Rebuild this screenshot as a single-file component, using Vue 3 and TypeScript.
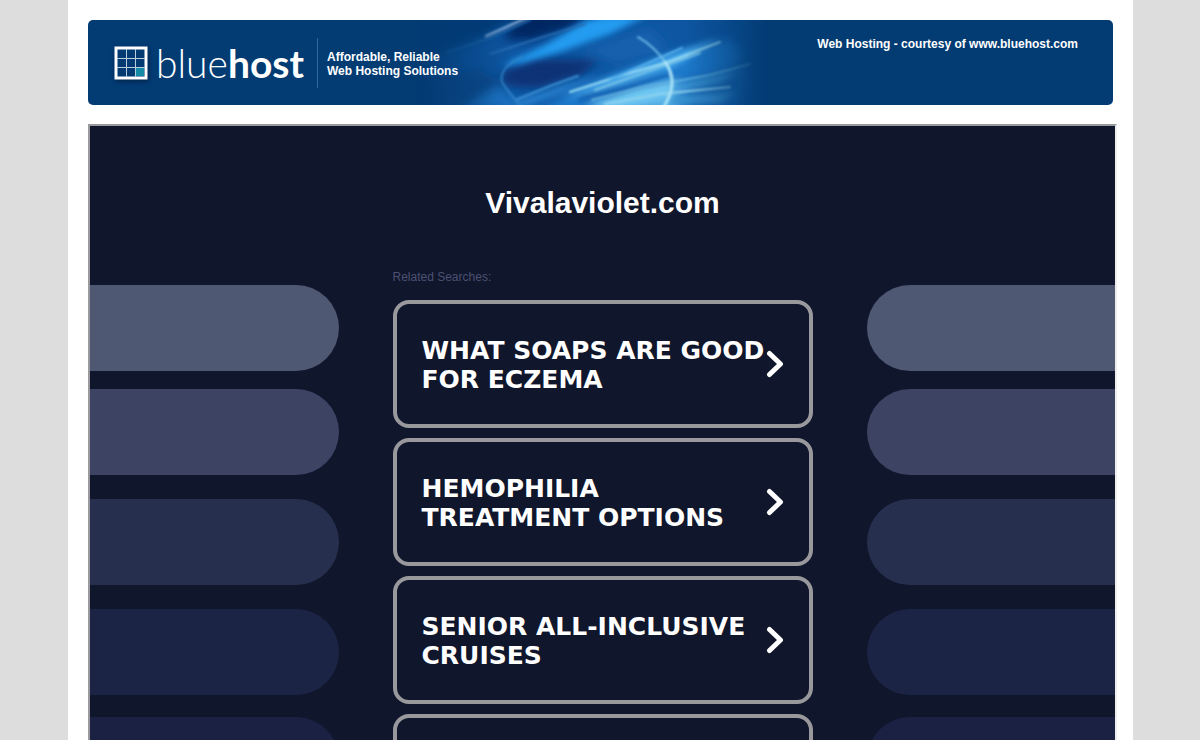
<script setup lang="ts">
interface Search {
  id: number
  label: string
}

const searches: Search[] = [
  { id: 1, label: 'What soaps are good for eczema' },
  { id: 2, label: 'Hemophilia treatment options' },
  { id: 3, label: 'Senior all-inclusive cruises' },
]

const pills: string[] = ['first', 'second', 'third', 'fourth', 'fifth']
</script>

<template>
  <div class="page">
    <div class="sheet">
      <header class="banner">
        <svg class="rays" viewBox="0 0 360 85" aria-hidden="true">
          <defs>
            <linearGradient id="fade" x1="0" x2="1" y1="0" y2="0">
              <stop offset="0" stop-color="#fff" stop-opacity="0" />
              <stop offset="0.25" stop-color="#fff" />
              <stop offset="0.74" stop-color="#fff" />
              <stop offset="0.97" stop-color="#fff" stop-opacity="0" />
            </linearGradient>
            <mask id="edges"><rect width="360" height="85" fill="url(#fade)" /></mask>
            <filter id="soft" filterUnits="userSpaceOnUse" x="-20" y="-20" width="400" height="125"><feGaussianBlur stdDeviation="5" /></filter>
            <filter id="mid" filterUnits="userSpaceOnUse" x="-20" y="-20" width="400" height="125"><feGaussianBlur stdDeviation="3" /></filter>
            <filter id="fine" filterUnits="userSpaceOnUse" x="-20" y="-20" width="400" height="125"><feGaussianBlur stdDeviation="1" /></filter>
          </defs>
          <g mask="url(#edges)">
            <rect width="360" height="85" fill="#0e56a2" />
            <g filter="url(#soft)">
              <path d="M-10 -10H110L60 18L-10 42Z" fill="#053a78" />
              <path d="M105 -10H178L150 8L112 20L82 20Z" fill="#052762" />
              <path d="M82 52L112 38L180 40L160 56L118 68L84 66Z" fill="#0b3376" />
              <path d="M-10 60L60 50L84 62L30 95H-10Z" fill="#07498c" />
              <path d="M40 90L78 66L105 90Z" fill="#1a73c2" />
              <path d="M160 30L230 8L250 30L200 44Z" fill="#1660ae" />
              <path d="M110 95L160 66L230 42L310 18L325 34L270 95Z" fill="#1d78ca" />
              <path d="M175 90L210 70L258 60L258 90Z" fill="#58b2e6" />
              <path d="M262 60L330 45L320 90H265Z" fill="#1566b2" />
            </g>
            <g filter="url(#mid)">
              <path d="M80 46L125 25L165 1L185 -4H226L190 14L140 32L102 43Z" fill="#249bf0" />
              <path d="M142 78L190 58L246 36L300 18L256 46L200 66Z" fill="#45a9ec" />
              <path d="M165 86L215 71L253 62L250 76L200 88Z" fill="#70c8f2" />
              <path d="M160 76L205 64L250 50L205 70L158 82Z" fill="#0b56a8" />
              <path d="M94 82L140 66L180 54L140 74L102 88Z" fill="#2580cd" />
              <path d="M250 66L325 50L300 62L252 73Z" fill="#3f9bd8" />
              <path d="M252 76L318 72L300 83L250 85Z" fill="#3792d0" />
            </g>
            <g filter="url(#fine)" fill="none" stroke-linecap="round">
              <path d="M150 72L200 56L245 43L300 22" stroke="#9addf5" stroke-width="2" />
              <path d="M175 70L240 47L280 33" stroke="#79c2e6" stroke-width="2" />
              <path d="M190 60L235 40L262 28" stroke="#55b1ec" stroke-width="2" />
              <path d="M172 80L225 67L290 55L330 44" stroke="#5caede" stroke-width="2" />
              <path d="M185 84L240 74L310 67" stroke="#8fd3ef" stroke-width="2" />
              <path d="M160 80L205 68L252 54" stroke="#1267b9" stroke-width="2" />
              <path d="M96 80L130 66L158 56" stroke="#3b90d4" stroke-width="2" />
              <path d="M26 33L70 18L110 0" stroke="#1c66aa" stroke-width="2" />
              <path d="M70 34L120 18L165 4" stroke="#276cb2" stroke-width="2" />
              <path d="M66 16L106 -2" stroke="#8db6e0" stroke-width="2" />
              <path d="M218 17Q235 27 245 42" stroke="#6fbce8" stroke-width="2" />
              <path d="M245 42Q260 62 243 88" stroke="#a6e2f7" stroke-width="3" />
              <path d="M102 37Q78 48 82 62Q88 73 102 87" stroke="#2e82c8" stroke-width="2" />
            </g>
          </g>
        </svg>
        <a class="brand" href="#" aria-label="bluehost">
          <svg class="mark" viewBox="0 0 34 34" aria-hidden="true">
            <rect x="2" y="2" width="30" height="30" fill="#033a72" stroke="#fff" stroke-width="3" />
            <rect x="22" y="22" width="8" height="8" fill="#168ba8" />
            <path d="M12.500 3V31M21.500 3V31M3 12.500H31M3 21.500H31" stroke="#b8cede" stroke-width="1" />
          </svg>
          <span class="word">blue<b>host</b></span>
        </a>
        <p class="tagline">Affordable, Reliable<br />Web Hosting Solutions</p>
        <a class="courtesy" href="#">Web Hosting - courtesy of www.bluehost.com</a>
      </header>

      <main class="frame">
        <div class="pills left" aria-hidden="true">
          <span v-for="pill in pills" :key="pill" class="pill" :class="pill"></span>
        </div>
        <section class="content">
          <h1>Vivalaviolet.com</h1>
          <h2>Related Searches:</h2>
          <nav class="list">
            <a v-for="search in searches" :key="search.id" class="card" href="#">
              <span class="label">{{ search.label }}</span>
              <svg class="arrow" viewBox="0 0 18 28" aria-hidden="true">
                <path d="M3.500 3.500L14.500 14L3.500 24.500" fill="none" stroke="#fff" stroke-width="5" stroke-linecap="round" stroke-linejoin="round" />
              </svg>
            </a>
            <div class="card"></div>
          </nav>
        </section>
        <div class="pills right" aria-hidden="true">
          <span v-for="pill in pills" :key="pill" class="pill" :class="pill"></span>
        </div>
      </main>
    </div>
  </div>
</template>

<style>
body {
  margin: 0;
  background: #ddd;
}
</style>

<style scoped>
.page {
  box-sizing: border-box;
  height: 100vh;
  overflow: hidden;
  padding: 0 67px 0 68px;
  background: #ddd;
  font-family: "Liberation Sans", Arial, sans-serif;
}
.sheet {
  box-sizing: border-box;
  min-height: 100vh;
  padding: 20px 20px 0;
  background: #fff;
}
.banner {
  position: relative;
  display: flex;
  align-items: center;
  box-sizing: border-box;
  height: 85px;
  padding: 0 35px 0 26px;
  overflow: hidden;
  border-radius: 5px;
  background: #033b73;
  color: #fff;
  font-size: 12px;
  font-weight: bold;
  line-height: 14px;
}
.rays {
  position: absolute;
  top: 0;
  left: 332px;
  width: 360px;
  height: 85px;
}
.brand,
.tagline,
.courtesy {
  position: relative;
  color: #fff;
  text-decoration: none;
}
.brand {
  display: flex;
  align-items: center;
  gap: 8px;
  width: 203px;
}
.mark {
  flex: none;
  width: 34px;
  height: 34px;
  filter: drop-shadow(1px 2px 2px #02244a);
}
.word {
  font-family: Lato, sans-serif;
  font-size: 39px;
  font-weight: 300;
  line-height: 40px;
}
.word b {
  font-weight: bold;
}
.tagline {
  margin: 0;
  padding: 12px 0 10px 9px;
  border-left: 1px solid #2a699e;
}
.courtesy {
  align-self: flex-start;
  margin-top: 17px;
  margin-left: auto;
}
.frame {
  display: grid;
  grid-template-columns: 1fr 528px 1fr;
  margin: 19px -4px 0 0;
  border: 2px solid;
  border-color: #9a9a9e #eee #eee #9a9a9e;
  background: #10162b;
}
.pills {
  display: flex;
  flex-direction: column;
  padding-top: 159px;
}
.pill {
  height: 86px;
}
.left .pill {
  border-radius: 0 43px 43px 0;
}
.right .pill {
  border-radius: 43px 0 0 43px;
}
.first {
  margin-bottom: 18px;
  background: #4f5873;
}
.second {
  margin-bottom: 24px;
  background: #3c4363;
}
.third {
  margin-bottom: 24px;
  background: #272f4e;
}
.fourth {
  margin-bottom: 22px;
  background: #1c2445;
}
.fifth {
  background: #1a2143;
}
.content {
  padding: 59px 54px 0;
}
h1 {
  margin: 0;
  color: #fff;
  font-size: 30px;
  line-height: 36px;
  text-align: center;
}
h2 {
  margin: 49px 0 16px;
  color: #4c5173;
  font-size: 12px;
  font-weight: normal;
  line-height: 14px;
}
.list {
  display: flex;
  flex-direction: column;
  gap: 10px;
}
.card {
  display: flex;
  align-items: center;
  justify-content: space-between;
  box-sizing: border-box;
  min-height: 128px;
  padding: 0 25px;
  border: 4px solid #99999d;
  border-radius: 16px;
  color: #fff;
  font-family: Verdana, "DejaVu Sans", sans-serif;
  font-size: 25px;
  font-weight: bold;
  line-height: 29px;
  text-decoration: none;
  text-transform: uppercase;
}
.label {
  flex: 1;
  padding-top: 2px;
}
.arrow {
  flex: none;
  width: 18px;
  height: 28px;
}
</style>
